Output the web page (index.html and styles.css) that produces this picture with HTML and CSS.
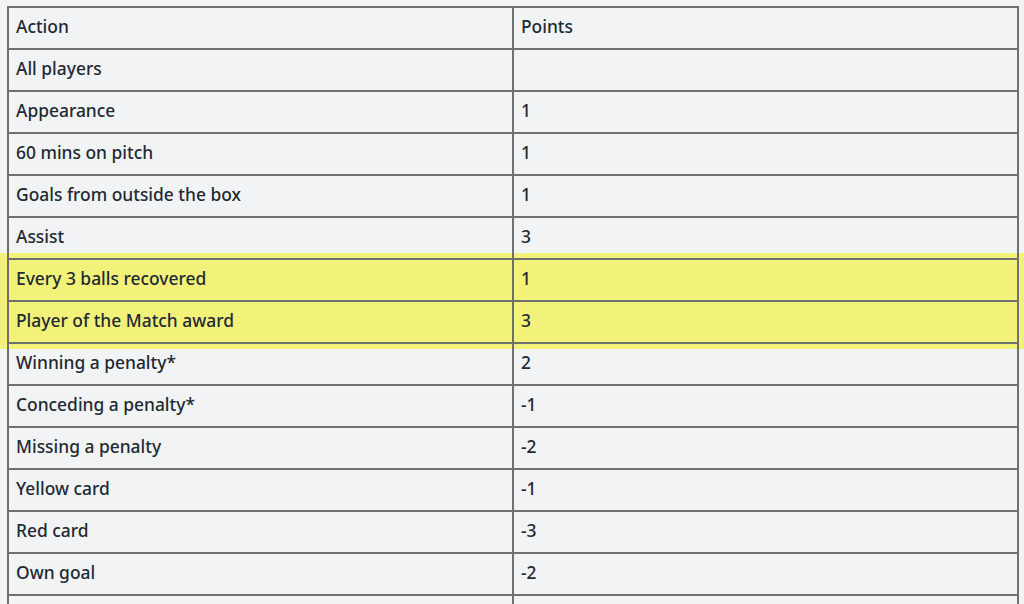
FILE: index.html
```html
<!DOCTYPE html>
<html>
<head>
<meta charset="utf-8">
<link rel="stylesheet" href="styles.css">
</head>
<body>
<div class="highlight"></div>
<table class="points">
  <tr><td class="c1">Action</td><td>Points</td></tr>
  <tr><td class="c1">All players</td><td></td></tr>
  <tr><td class="c1">Appearance</td><td>1</td></tr>
  <tr><td class="c1">60 mins on pitch</td><td>1</td></tr>
  <tr><td class="c1">Goals from outside the box</td><td>1</td></tr>
  <tr><td class="c1">Assist</td><td>3</td></tr>
  <tr><td class="c1">Every 3 balls recovered</td><td>1</td></tr>
  <tr><td class="c1">Player of the Match award</td><td>3</td></tr>
  <tr><td class="c1">Winning a penalty*</td><td>2</td></tr>
  <tr><td class="c1">Conceding a penalty*</td><td>-1</td></tr>
  <tr><td class="c1">Missing a penalty</td><td>-2</td></tr>
  <tr><td class="c1">Yellow card</td><td>-1</td></tr>
  <tr><td class="c1">Red card</td><td>-3</td></tr>
  <tr><td class="c1">Own goal</td><td>-2</td></tr>
  <tr><td class="c1"></td><td></td></tr>
</table>
</body>
</html>
```
FILE: styles.css
```css
html, body {
  margin: 0;
  padding: 0;
  background: #f2f3f5;
  overflow: hidden;
  height: 604px;
}
body {
  position: relative;
  padding: 6px 0 0 7px;
  box-sizing: border-box;
  font-family: "Noto Sans", "Open Sans", sans-serif;
  color: #1f2a33;
}
.highlight {
  position: absolute;
  left: 0;
  top: 253px;
  width: 1024px;
  height: 96px;
  background: #f2f27a;
  z-index: 0;
}
.points {
  position: relative;
  z-index: 1;
  border-collapse: collapse;
  width: 1012px;
  table-layout: fixed;
}
.points td {
  border: 2px solid #707070;
  padding: 6px 7px 10px 7px;
  height: 24px;
  line-height: 24px;
  font-size: 17.4px;
  font-weight: 500;
  vertical-align: middle;
}
.points td.c1 {
  width: 489px;
}
```
